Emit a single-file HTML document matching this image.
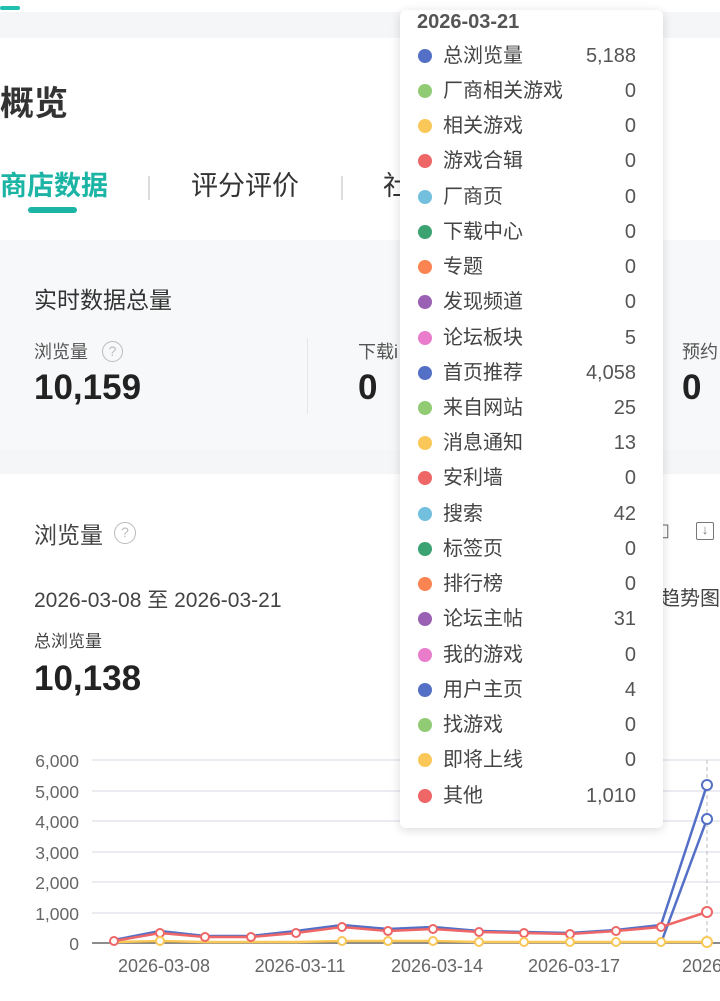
<!DOCTYPE html>
<html><head><meta charset="utf-8"><style>
*{margin:0;padding:0;box-sizing:border-box}
body{width:720px;height:1001px;overflow:hidden;background:#f5f6f7;font-family:"Liberation Sans","Noto Sans CJK SC",sans-serif;position:relative;color:#333}
.a{position:absolute;white-space:nowrap}
.tt{position:absolute;left:400px;top:10px;width:263px;height:818px;background:#fff;border-radius:6px;box-shadow:0 2px 10px rgba(0,0,0,.15)}
.row{position:absolute;left:0;width:263px;height:30px;font-size:20px;color:#444;line-height:30px}
.row i{position:absolute;left:18px;top:8px;width:14px;height:14px;border-radius:50%}
.row span{position:absolute;left:43px;top:0;line-height:30px}
.row b{position:absolute;right:27px;top:0;font-weight:normal;color:#555;line-height:30px}
</style></head><body>
<div class="a" style="left:0;top:0;width:720px;height:12px;background:#fff"></div>
<div class="a" style="left:0;top:6px;width:20px;height:4px;background:#1fc0b0;border-radius:2px"></div>
<div class="a" style="left:0;top:38px;width:720px;height:202px;background:#fff"></div>
<div class="a" style="left:0;top:76px;font-size:34px;font-weight:bold;color:#333">概览</div>
<div class="a" style="left:0;top:164px;font-size:27px;color:#1cb5a5;font-weight:bold">商店数据</div>
<div class="a" style="left:28px;top:207px;width:49px;height:6px;background:#1cb5a5;border-radius:3px"></div>
<div class="a" style="left:148px;top:176px;width:2px;height:24px;background:#ddd"></div>
<div class="a" style="left:191px;top:164px;font-size:27px;color:#333">评分评价</div>
<div class="a" style="left:341px;top:176px;width:2px;height:24px;background:#ddd"></div>
<div class="a" style="left:383px;top:164px;font-size:27px;color:#333">社</div>
<div class="a" style="left:0;top:240px;width:720px;height:210px;background:#f7f8f9"></div>
<div class="a" style="left:34px;top:281px;font-size:23px;color:#333">实时数据总量</div>
<div class="a" style="left:34px;top:338px;font-size:18px;color:#555">浏览量</div>
<div class="a" style="left:102px;top:341px;width:21px;height:21px;border:1.5px solid #bbb;border-radius:50%;font-size:14px;color:#bbb;text-align:center;line-height:18px">?</div>
<div class="a" style="left:34px;top:368px;font-size:35px;font-weight:bold;color:#222">10,159</div>
<div class="a" style="left:307px;top:338px;width:1px;height:76px;background:#e6e6e6"></div>
<div class="a" style="left:358px;top:338px;font-size:18px;color:#555">下载i</div>
<div class="a" style="left:358px;top:368px;font-size:35px;font-weight:bold;color:#222">0</div>
<div class="a" style="left:682px;top:338px;font-size:18px;color:#555">预约</div>
<div class="a" style="left:682px;top:368px;font-size:35px;font-weight:bold;color:#222">0</div>
<div class="a" style="left:0;top:474px;width:720px;height:527px;background:#fff"></div>
<div class="a" style="left:34px;top:516px;font-size:23px;color:#444">浏览量</div>
<div class="a" style="left:114px;top:522px;width:22px;height:22px;border:1.5px solid #bbb;border-radius:50%;font-size:14px;color:#bbb;text-align:center;line-height:19px">?</div>
<div class="a" style="left:34px;top:584px;font-size:21px;color:#444">2026-03-08 至 2026-03-21</div>
<div class="a" style="left:34px;top:627px;font-size:17px;color:#444">总浏览量</div>
<div class="a" style="left:34px;top:659px;font-size:35px;font-weight:bold;color:#222">10,138</div>
<div class="a" style="left:660px;top:520px;font-size:18px;color:#666">▯</div>
<div class="a" style="left:696px;top:522px;width:18px;height:18px;border:1.5px solid #777;border-radius:2px;font-size:13px;color:#777;text-align:center;line-height:14px">↓</div>
<div class="a" style="left:660px;top:582px;font-size:20px;color:#444">趋势图</div>
<svg class="a" style="left:0;top:740px" width="720" height="261" viewBox="0 740 720 261">
<g stroke="#e3e6ee" stroke-width="1.5">
<line x1="92" y1="760" x2="720" y2="760"/><line x1="92" y1="791" x2="720" y2="791"/><line x1="92" y1="821" x2="720" y2="821"/><line x1="92" y1="852" x2="720" y2="852"/><line x1="92" y1="882" x2="720" y2="882"/><line x1="92" y1="913" x2="720" y2="913"/></g>
<line x1="92" y1="943" x2="720" y2="943" stroke="#666" stroke-width="1.5"/>
<line x1="707" y1="760" x2="707" y2="943" stroke="#bbb" stroke-dasharray="4 3"/>
<g font-size="17.5" fill="#666" text-anchor="end" font-family="Liberation Sans">
<text x="79" y="767">6,000</text><text x="79" y="798">5,000</text><text x="79" y="828">4,000</text><text x="79" y="859">3,000</text><text x="79" y="889">2,000</text><text x="79" y="920">1,000</text><text x="79" y="950">0</text></g>
<g font-size="18" fill="#666" text-anchor="middle" font-family="Liberation Sans">
<text x="164" y="972">2026-03-08</text><text x="300" y="972">2026-03-11</text><text x="437" y="972">2026-03-14</text><text x="574" y="972">2026-03-17</text><text x="710" y="972">2026-0</text></g>
<g fill="none" stroke-width="2.5">
<polyline stroke="#fac858" points="114,942 160,941 205,942 251,942 296,942 342,941 388,941 433,941 479,942 524,942 570,942 616,942 661,942 707,942"/>
<polyline stroke="#5470c6" points="661,943 707,819"/>
<polyline stroke="#5470c6" points="114,940 160,931 205,936 251,936 296,931 342,925 388,929 433,927 479,931 524,932 570,933 616,930 661,925 707,785"/>
<polyline stroke="#ee6666" points="114,941 160,933 205,937 251,937 296,933 342,927 388,931 433,929 479,932 524,933 570,934 616,931 661,927 707,912"/>
</g>
<g fill="#fff" stroke-width="2">
<circle cx="707" cy="785" r="5" stroke="#5470c6"/><circle cx="707" cy="819" r="5" stroke="#5470c6"/><circle cx="707" cy="912" r="5" stroke="#ee6666"/><circle cx="707" cy="942" r="5" stroke="#fac858"/>
<g stroke="#ee6666"><circle cx="114" cy="941" r="4"/><circle cx="160" cy="933" r="4"/><circle cx="205" cy="937" r="4"/><circle cx="251" cy="937" r="4"/><circle cx="296" cy="933" r="4"/><circle cx="342" cy="927" r="4"/><circle cx="388" cy="931" r="4"/><circle cx="433" cy="929" r="4"/><circle cx="479" cy="932" r="4"/><circle cx="524" cy="933" r="4"/><circle cx="570" cy="934" r="4"/><circle cx="616" cy="931" r="4"/><circle cx="661" cy="927" r="4"/></g>
<g stroke="#fac858"><circle cx="160" cy="941" r="4"/><circle cx="342" cy="941" r="4"/><circle cx="388" cy="941" r="4"/><circle cx="433" cy="941" r="4"/><circle cx="479" cy="942" r="4"/><circle cx="524" cy="942" r="4"/><circle cx="570" cy="942" r="4"/><circle cx="616" cy="942" r="4"/><circle cx="661" cy="942" r="4"/></g>
</g></svg>
<div class="tt">
<div class="a" style="left:17px;top:0;font-size:20px;font-weight:bold;color:#555;line-height:24px">2026-03-21</div>
<div class="row" style="top:31px"><i style="background:#5470c6"></i><span>总浏览量</span><b>5,188</b></div>
<div class="row" style="top:66px"><i style="background:#91cc75"></i><span>厂商相关游戏</span><b>0</b></div>
<div class="row" style="top:101px"><i style="background:#fac858"></i><span>相关游戏</span><b>0</b></div>
<div class="row" style="top:136px"><i style="background:#ee6666"></i><span>游戏合辑</span><b>0</b></div>
<div class="row" style="top:172px"><i style="background:#73c0de"></i><span>厂商页</span><b>0</b></div>
<div class="row" style="top:207px"><i style="background:#3ba272"></i><span>下载中心</span><b>0</b></div>
<div class="row" style="top:242px"><i style="background:#fc8452"></i><span>专题</span><b>0</b></div>
<div class="row" style="top:277px"><i style="background:#9a60b4"></i><span>发现频道</span><b>0</b></div>
<div class="row" style="top:313px"><i style="background:#ea7ccc"></i><span>论坛板块</span><b>5</b></div>
<div class="row" style="top:348px"><i style="background:#5470c6"></i><span>首页推荐</span><b>4,058</b></div>
<div class="row" style="top:383px"><i style="background:#91cc75"></i><span>来自网站</span><b>25</b></div>
<div class="row" style="top:418px"><i style="background:#fac858"></i><span>消息通知</span><b>13</b></div>
<div class="row" style="top:453px"><i style="background:#ee6666"></i><span>安利墙</span><b>0</b></div>
<div class="row" style="top:489px"><i style="background:#73c0de"></i><span>搜索</span><b>42</b></div>
<div class="row" style="top:524px"><i style="background:#3ba272"></i><span>标签页</span><b>0</b></div>
<div class="row" style="top:559px"><i style="background:#fc8452"></i><span>排行榜</span><b>0</b></div>
<div class="row" style="top:594px"><i style="background:#9a60b4"></i><span>论坛主帖</span><b>31</b></div>
<div class="row" style="top:630px"><i style="background:#ea7ccc"></i><span>我的游戏</span><b>0</b></div>
<div class="row" style="top:665px"><i style="background:#5470c6"></i><span>用户主页</span><b>4</b></div>
<div class="row" style="top:700px"><i style="background:#91cc75"></i><span>找游戏</span><b>0</b></div>
<div class="row" style="top:735px"><i style="background:#fac858"></i><span>即将上线</span><b>0</b></div>
<div class="row" style="top:771px"><i style="background:#ee6666"></i><span>其他</span><b>1,010</b></div>
</div>
</body></html>
